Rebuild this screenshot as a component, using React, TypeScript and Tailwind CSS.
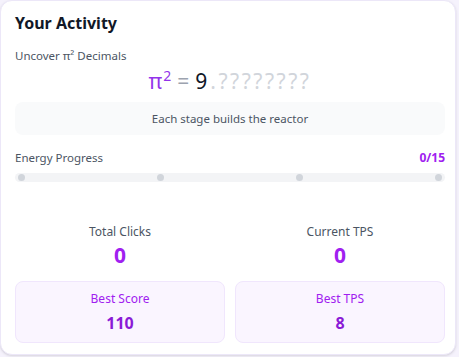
import React from "react";

export default function App() {
  return (
    <div className="w-[459px] h-[357px] bg-[#f5f2fc] overflow-hidden" style={{ fontFamily: '"Noto Sans", "Open Sans", sans-serif' }}>
      <div className="w-[456px] h-[355px] bg-white rounded-xl border border-[#ece7f8] shadow-sm pl-[14px] pr-[10px] pt-[10px]">
        <h2 className="text-[16px] font-bold text-[#111827] leading-[24px]">Your Activity</h2>
        <div className="mt-[13px] text-[11.5px] text-[#4b5563] leading-[16px]">Uncover π² Decimals</div>
        <div className="mt-[3px] h-[28px] flex items-baseline justify-center leading-[28px]">
          <span className="text-[21px] text-[#9333ea] leading-[28px]">π<span className="text-[14px] leading-[14px] relative -top-[8px] ml-[1px]">2</span></span>
          <span className="text-[21px] text-[#9ca3af] mx-[6px]">=</span>
          <span className="text-[21px] text-[#111827]">9</span>
          <span className="text-[21px] text-[#d1d5db] tracking-[2.5px] ml-[3px]">.????????</span>
        </div>
        <div className="mt-[7px] h-[33px] rounded-lg bg-[#f9fafb] flex items-center justify-center text-[11.5px] text-[#4b5563]">
          Each stage builds the reactor
        </div>
        <div className="mt-[15px] flex items-center justify-between leading-[16px]">
          <span className="text-[11.5px] text-[#4b5563]">Energy Progress</span>
          <span className="text-[12px] font-bold text-[#a020f0]">0/15</span>
        </div>
        <div className="mt-[7px] h-[9px] rounded-full bg-[#f3f4f6] flex items-center justify-between px-[3px]">
          <span className="w-[7px] h-[7px] rounded-full bg-[#d1d5db]" />
          <span className="w-[7px] h-[7px] rounded-full bg-[#d1d5db]" />
          <span className="w-[7px] h-[7px] rounded-full bg-[#d1d5db]" />
          <span className="w-[7px] h-[7px] rounded-full bg-[#d1d5db]" />
        </div>
        <div className="mt-[41px] grid grid-cols-2 gap-[10px]">
          <div className="flex flex-col items-center">
            <span className="text-[12px] text-[#4b5563] leading-[18px]">Total Clicks</span>
            <span className="text-[21px] font-bold text-[#a020f0] leading-[28px]">0</span>
          </div>
          <div className="flex flex-col items-center">
            <span className="text-[12px] text-[#4b5563] leading-[18px]">Current TPS</span>
            <span className="text-[21px] font-bold text-[#a020f0] leading-[28px]">0</span>
          </div>
        </div>
        <div className="mt-[12px] grid grid-cols-2 gap-[10px]">
          <div className="h-[62px] rounded-lg bg-[#faf5ff] border border-[#f0e6fd] flex flex-col items-center justify-center">
            <span className="text-[12px] text-[#a020f0] leading-[18px]">Best Score</span>
            <span className="mt-[4px] text-[16px] font-bold text-[#8a1ad6] leading-[22px]">110</span>
          </div>
          <div className="h-[62px] rounded-lg bg-[#faf5ff] border border-[#f0e6fd] flex flex-col items-center justify-center">
            <span className="text-[12px] text-[#a020f0] leading-[18px]">Best TPS</span>
            <span className="mt-[4px] text-[16px] font-bold text-[#8a1ad6] leading-[22px]">8</span>
          </div>
        </div>
      </div>
    </div>
  );
}
